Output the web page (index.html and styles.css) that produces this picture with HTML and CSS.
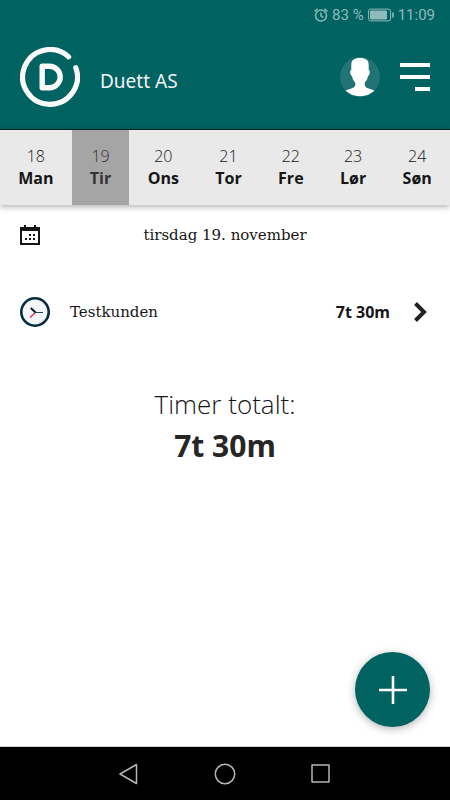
FILE: index.html
```html
<!DOCTYPE html>
<html lang="no">
<head>
  <meta charset="UTF-8">
  <meta name="viewport" content="width=device-width, initial-scale=1.0">
  <title>Duett AS</title>
  <link rel="stylesheet" href="styles.css">
</head>
<body>
  <header>
    <div class="status-bar">
      <svg width="14" height="14" viewBox="0 0 14 14" fill="none" stroke="currentColor" stroke-width="1.5">
        <circle cx="7" cy="7.6" r="5.5"/>
        <path d="M7 4.4v3.400l2.200 1.600M.6 3.400L3.600.8M13.400 3.400L10.400.8"/>
      </svg>
      <span>83 %</span>
      <svg width="26" height="14" viewBox="0 0 26 14" fill="none" stroke="currentColor">
        <rect x=".6" y="1.100" width="22" height="11.800" rx="2"/>
        <path d="M2.500 3h16v8h-16z" fill="currentColor"/>
        <path d="M25 4.500v5" stroke-width="1.600"/>
      </svg>
      <span>11:09</span>
    </div>

    <div class="top-bar">
      <svg width="60" height="60" viewBox="0 0 60 60" fill="none" stroke="#fafafa" stroke-linecap="round" stroke-linejoin="round">
        <path d="M48.600 9.800A27.400 27.400 0 1 0 55.800 20.600" stroke-width="5.200"/>
        <path d="M22.200 19.200h7.200a10.800 10.800 0 0 1 0 21.600h-7.200z" stroke-width="5.400"/>
      </svg>
      <h1>Duett AS</h1>
      <button class="icon-button" aria-label="Profil">
        <svg width="40" height="40" viewBox="0 0 40 40">
          <circle cx="20" cy="20" r="20" fill="#217474"/>
          <path d="M11.300 8C11.300 3 14 1 20 1s8.700 2 8.700 7v5c1.300.2 1.200 1.800.9 3.400-.3 1.600-.8 2.300-1.600 2.500-.5 3-1.600 4.800-3.200 6.600-.5 3.500.6 4.800 3.200 5.700l6.400 2.300C31 37 26 39.200 20 39.200S9 37 5.600 33.500l6.400-2.300c2.600-.9 3.700-2.200 3.200-5.700-1.600-1.800-2.700-3.600-3.200-6.600-.8-.2-1.300-.9-1.600-2.500-.3-1.600-.4-3.200.9-3.400z" fill="#fff"/>
        </svg>
      </button>
      <button class="icon-button" aria-label="Meny">
        <svg width="30" height="30" viewBox="0 0 30 30" fill="#fff">
          <rect width="30" height="4" y="1"/>
          <rect width="30" height="4" y="13"/>
          <rect width="15" height="4" x="15" y="25"/>
        </svg>
      </button>
    </div>
  </header>

  <nav class="days">
    <button class="day">18<b>Man</b></button>
    <button class="day selected">19<b>Tir</b></button>
    <button class="day">20<b>Ons</b></button>
    <button class="day">21<b>Tor</b></button>
    <button class="day">22<b>Fre</b></button>
    <button class="day">23<b>Lør</b></button>
    <button class="day">24<b>Søn</b></button>
  </nav>

  <main>
    <div class="date-row">
      <button class="icon-button" aria-label="Velg dato">
        <svg width="20" height="20" viewBox="0 0 20 20" fill="#161616">
          <path d="M0 2h4V0h2v2h8V0h2v2h4v18H0zM2 6v12h16V6z" fill-rule="evenodd"/>
          <path d="M9 9h2v2H9zM13 9h2v2h-2zM5 13h2v2H5zM9 13h2v2H9zM13 13h2v2h-2z"/>
        </svg>
      </button>
      <span>tirsdag 19. november</span>
    </div>

    <a class="entry" href="#">
      <svg width="30" height="30" viewBox="0 0 30 30" fill="none">
        <circle cx="15" cy="15" r="13.700" fill="#f3f5f7" stroke="#062c40" stroke-width="2.600"/>
        <path d="M15.500 15.500H23" stroke="#174a55" stroke-width="1"/>
        <path d="M15.500 15.500L10 20.500" stroke="#d62f57" stroke-width="1.300"/>
        <path d="M15.500 15.500L10.800 11" stroke="#101820" stroke-width="2"/>
      </svg>
      <span class="customer">Testkunden</span>
      <b>7t 30m</b>
      <svg width="20" height="20" viewBox="0 0 20 20" fill="none" stroke="#222" stroke-width="4">
        <path d="M5.500 1.500L14 10l-8.500 8.500"/>
      </svg>
    </a>

    <section class="total">
      <h2>Timer totalt:</h2>
      <p>7t 30m</p>
    </section>

    <button class="add" aria-label="Legg til">
      <svg width="28" height="28" viewBox="0 0 28 28" stroke="#fff" stroke-width="2.600">
        <path d="M14 0v28M0 14h28"/>
      </svg>
    </button>
  </main>

  <footer>
    <button class="icon-button" aria-label="Tilbake">
      <svg width="22" height="22" viewBox="0 0 22 22"><path d="M18.500 1.500v19L2 11z"/></svg>
    </button>
    <button class="icon-button" aria-label="Hjem">
      <svg width="22" height="22" viewBox="0 0 22 22"><circle cx="11" cy="11" r="9.700"/></svg>
    </button>
    <button class="icon-button" aria-label="Oversikt">
      <svg width="22" height="22" viewBox="0 0 22 22"><rect x="2" y="2" width="17" height="17"/></svg>
    </button>
  </footer>
</body>
</html>
```

FILE: styles.css
```css
* {
  box-sizing: border-box;
}

body {
  margin: 0;
  min-height: 100vh;
  display: flex;
  flex-direction: column;
  background: #fff;
  color: #161616;
  font-family: "Open Sans", "Noto Sans", sans-serif;
  font-size: 16px;
}

h1, h2, p {
  margin: 0;
}

svg {
  display: block;
  flex: none;
}

button {
  border: 0;
  padding: 0;
  background: none;
  color: inherit;
  font: inherit;
  cursor: pointer;
}

header {
  background: #006261;
  border-bottom: 1px solid #00211c;
}

.status-bar {
  display: flex;
  justify-content: flex-end;
  align-items: center;
  gap: 4px;
  height: 30px;
  padding-right: 15px;
  color: #8fbaba;
  font-family: Roboto, sans-serif;
  font-size: 15px;
}

.top-bar {
  display: flex;
  align-items: center;
  gap: 20px;
  padding: 17px 20px 22px;
}

.top-bar h1 {
  flex: 1;
  padding-top: 8px;
  color: #f4f4f4;
  font-family: "Noto Sans", sans-serif;
  font-size: 19px;
  font-weight: 400;
}

.days {
  display: flex;
  background: #e9e9e9;
  box-shadow: 0 2px 6px rgba(0, 0, 0, 0.3);
}

.day {
  flex: 1 1 auto;
  padding: 15px 0 16px;
  font-weight: 300;
  line-height: 22px;
}

.day b {
  display: block;
  padding: 0 16px;
  font-weight: 700;
}

.day.selected {
  background: #a5a5a5;
  color: #333;
}

main {
  flex: 1;
  display: flex;
  flex-direction: column;
  padding: 15px 20px 19px;
}

.date-row {
  display: flex;
  align-items: center;
  height: 30px;
  font-family: "Roboto Slab", "DejaVu Serif", serif;
  font-size: 15px;
}

.date-row span {
  flex: 1;
  padding-right: 20px;
  text-align: center;
}

.entry {
  display: flex;
  align-items: center;
  gap: 20px;
  margin-top: 47px;
  color: inherit;
  text-decoration: none;
}

.customer {
  flex: 1;
  font-family: "Roboto Slab", "DejaVu Serif", serif;
  font-size: 15px;
}

.total {
  margin-top: 56px;
  text-align: center;
}

.total h2 {
  font-size: 26px;
  font-weight: 300;
  line-height: 42px;
}

.total p {
  color: #262626;
  font-size: 30px;
  font-weight: 700;
  line-height: 42px;
}

.add {
  display: flex;
  justify-content: center;
  align-items: center;
  width: 75px;
  height: 75px;
  margin: auto 0 0 auto;
  border-radius: 50%;
  background: #006261;
  box-shadow: 0 2px 8px rgba(0, 0, 0, 0.3);
}

footer {
  display: flex;
  justify-content: center;
  align-items: center;
  gap: 74px;
  height: 54px;
  border-top: 1px solid #d0d0d0;
  background: #000;
}

footer svg {
  fill: none;
  stroke: #b5b5b5;
  stroke-width: 1.5;
  stroke-linejoin: round;
}
```
